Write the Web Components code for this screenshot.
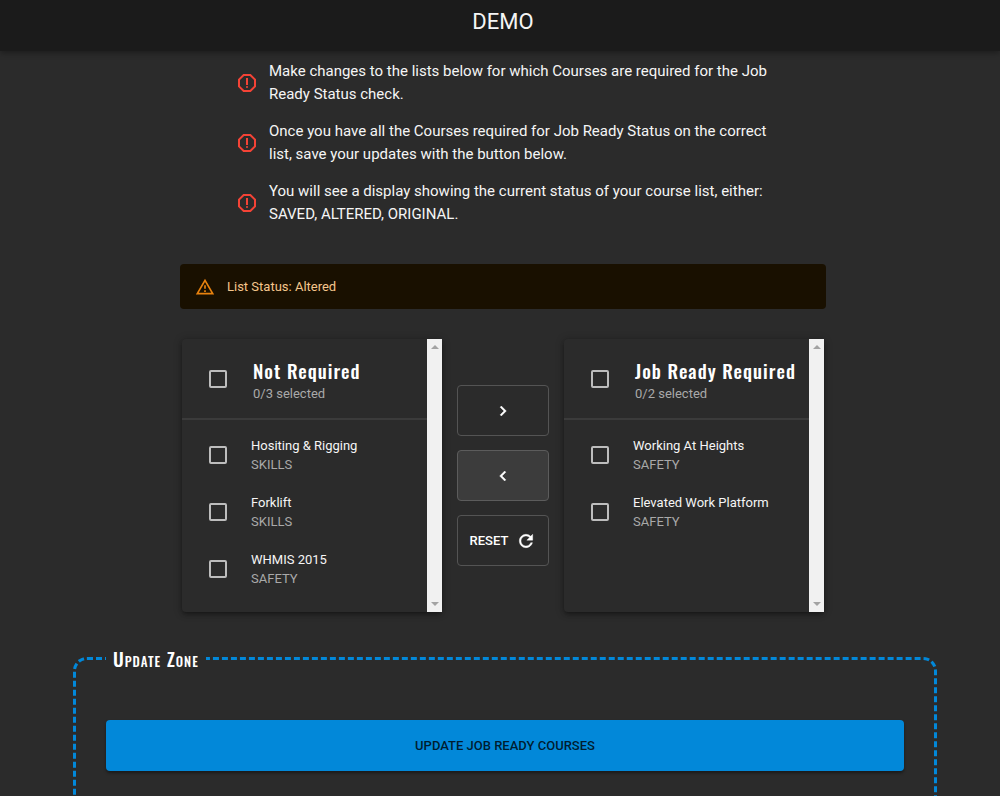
<!DOCTYPE html>
<html lang="en">
<head>
<meta charset="utf-8">
<meta name="viewport" content="width=device-width, initial-scale=1">
<title>Demo</title>
<style>
  html { background: #2b2b2b; scrollbar-width: none; }
  body {
    margin: 0;
    color: #f5f5f5;
    font-family: Roboto, "Liberation Sans", sans-serif;
    --display: Oswald, "Roboto Condensed", "Liberation Sans Narrow", Roboto, sans-serif;
    --accent: #0288d9;
    --muted: #a9a9a9;
  }
</style>
</head>
<body>
<demo-page></demo-page>

<script>
const define = (name, html, setup) => {
  const template = document.createElement('template');
  template.innerHTML = html;
  customElements.define(name, class extends HTMLElement {
    constructor() {
      super();
      this.attachShadow({ mode: 'open' }).append(template.content.cloneNode(true));
    }
    connectedCallback() {
      if (setup) setup(this, this.shadowRoot);
    }
  });
};

define('app-header', `
  <style>
    :host { display: block; background: #1b1b1b; box-shadow: 0 2px 6px rgba(0,0,0,.35); position: relative; }
    h1 { margin: 0; padding: 6px 0 13px 6px; text-align: center; font-size: 22px; line-height: 32px; font-weight: 400; }
  </style>
  <header><h1><slot></slot></h1></header>`);

define('notice-item', `
  <style>
    :host { display: flex; align-items: center; gap: 10px; padding: 7px 0; }
    svg { width: 24px; height: 24px; fill: #f44336; flex: none; }
    p { margin: 0; font-size: 15px; line-height: 23px; }
  </style>
  <svg viewBox="0 0 24 24" aria-hidden="true"><path d="M15.73 3H8.27L3 8.27v7.46L8.27 21h7.46L21 15.73V8.27L15.73 3zM19 14.9L14.9 19H9.1L5 14.9V9.1L9.1 5h5.8L19 9.1v5.8z"/><circle cx="12" cy="16" r="1"/><path d="M11 7h2v7h-2z"/></svg>
  <p><slot></slot></p>`);

define('status-alert', `
  <style>
    :host { display: flex; align-items: center; gap: 12px; padding: 0 15px; height: 45px; border-radius: 4px; background: #191000; color: #f5c68c; font-size: 13px; line-height: 19px; }
    svg { width: 20px; height: 20px; fill: #e8820e; flex: none; }
  </style>
  <svg viewBox="0 0 24 24" aria-hidden="true"><path d="M12 5.99L19.53 19H4.47L12 5.99M12 2L1 21h22L12 2zm1 14h-2v2h2v-2zm0-6h-2v4h2v-4z"/></svg>
  <span role="status"><slot></slot></span>`);

const checkbox = `
  input { appearance: none; box-sizing: border-box; width: 18px; height: 18px; margin: 0; border: 2px solid #bdbdbd; border-radius: 2px; flex: none; }
  input:checked { background: var(--accent); border-color: var(--accent); }`;

define('course-item', `
  <style>
    :host { display: block; }
    label { display: flex; align-items: center; gap: 24px; height: 57px; padding-left: 27px; font-size: 13px; line-height: 19px; }
    ${checkbox}
    span { display: block; }
    .kind { color: var(--muted); }
  </style>
  <label><input type="checkbox"><span><span><slot></slot></span><span class="kind"><slot name="kind"></slot></span></span></label>`);

define('scroll-rail', `
  <style>
    :host { display: flex; flex-direction: column; justify-content: space-between; align-items: center; width: 15px; padding: 6px 0; box-sizing: border-box; background: #f1f1f1; flex: none; }
    svg { width: 8px; height: 4px; fill: #a3a3a3; }
  </style>
  <svg viewBox="0 0 8 4" aria-hidden="true"><path d="M0 4 4 0l4 4z"/></svg>
  <svg viewBox="0 0 8 4" aria-hidden="true"><path d="M0 0h8L4 4z"/></svg>`);

define('course-card', `
  <style>
    :host { display: flex; min-height: 273px; border-radius: 4px; background: #2b2b2b; box-shadow: 0 3px 3px -2px rgba(0,0,0,.2), 0 3px 4px rgba(0,0,0,.14), 0 1px 8px rgba(0,0,0,.3); }
    section { flex: 1; min-width: 0; }
    label { display: flex; align-items: center; gap: 26px; height: 79px; padding-left: 27px; border-bottom: 2px solid #3b3b3b; }
    ${checkbox}
    h2 { margin: 0; color: #fff; font-family: var(--display); font-size: 19px; line-height: 30px; font-weight: 500; letter-spacing: 1px; white-space: nowrap; }
    .count { display: block; color: var(--muted); font-size: 13px; line-height: 18px; }
    .items { padding: 6px 0; }
  </style>
  <section>
    <label><input type="checkbox"><span><h2><slot name="title"></slot></h2><span class="count"><slot name="count"></slot></span></span></label>
    <div class="items"><slot></slot></div>
  </section>
  <scroll-rail></scroll-rail>`);

define('move-button', `
  <style>
    :host { display: block; }
    button { display: flex; align-items: center; justify-content: center; gap: 8px; width: 100%; height: 51px; padding: 0; border: 1px solid #545454; border-radius: 4px; background: none; color: #fff; font: 500 13px/20px Roboto, "Liberation Sans", sans-serif; }
    :host([active]) button { background: #3c3c3c; border-color: #5c5c5c; }
    ::slotted(svg) { width: 20px; height: 20px; fill: currentColor; stroke: currentColor; stroke-width: .5px; }
  </style>
  <button type="button"><slot></slot></button>`,
  (host, root) => root.querySelector('button').setAttribute('aria-label', host.getAttribute('label')));

define('update-zone', `
  <style>
    :host { display: block; }
    fieldset { margin: 0; min-width: 0; border: 3px dashed var(--accent); border-radius: 14px; padding: 47px 30px 60px; }
    legend { padding: 0 7px; color: #fff; font-family: var(--display); font-size: 19px; line-height: 30px; font-weight: 500; font-variant: small-caps; letter-spacing: 1px; }
    button { display: block; width: 100%; height: 51px; padding: 0; border: 0; border-radius: 4px; background: var(--accent); color: rgba(0,0,0,.8); box-shadow: 0 2px 3px rgba(0,0,0,.4); font: 500 13px/20px Roboto, "Liberation Sans", sans-serif; }
  </style>
  <fieldset>
    <legend><slot name="legend"></slot></legend>
    <button type="button"><slot></slot></button>
  </fieldset>`);

define('demo-page', `
  <style>
    :host { display: block; }
    main { display: flex; flex-direction: column; }
    .centered { padding-left: 6px; }
    .notices { max-width: 536px; margin: 0 auto; padding-top: 2px; }
    status-alert { max-width: 616px; margin: 31px auto 30px; }
    .transfer { display: grid; grid-template-columns: 260px 92px 260px; gap: 15px; justify-content: center; align-items: center; }
    .moves { display: grid; gap: 14px; }
    update-zone { margin: 31px 63px 0 73px; }
  </style>
  <app-header>DEMO</app-header>
  <main>
    <div class="centered">
      <div class="notices">
        <notice-item>Make changes to the lists below for which Courses are required for the Job Ready Status check.</notice-item>
        <notice-item>Once you have all the Courses required for Job Ready Status on the correct list, save your updates with the button below.</notice-item>
        <notice-item>You will see a display showing the current status of your course list, either: SAVED, ALTERED, ORIGINAL.</notice-item>
      </div>
      <status-alert>List Status: Altered</status-alert>
      <div class="transfer">
        <course-card>
          <span slot="title">Not Required</span><span slot="count">0/3 selected</span>
          <course-item>Hositing &amp; Rigging<span slot="kind">SKILLS</span></course-item>
          <course-item>Forklift<span slot="kind">SKILLS</span></course-item>
          <course-item>WHMIS 2015<span slot="kind">SAFETY</span></course-item>
        </course-card>
        <div class="moves">
          <move-button label="Move to required"><svg viewBox="0 0 24 24"><path d="M10 6 8.59 7.41 13.17 12l-4.58 4.59L10 18l6-6z"/></svg></move-button>
          <move-button label="Move to not required" active><svg viewBox="0 0 24 24"><path d="M15.41 7.41 14 6l-6 6 6 6 1.41-1.41L10.83 12z"/></svg></move-button>
          <move-button label="Reset">RESET<svg viewBox="0 0 24 24"><path d="M17.65 6.35C16.2 4.9 14.21 4 12 4c-4.42 0-7.99 3.58-7.99 8s3.57 8 7.99 8c3.73 0 6.84-2.55 7.73-6h-2.08c-.82 2.33-3.04 4-5.65 4-3.31 0-6-2.69-6-6s2.69-6 6-6c1.66 0 3.14.69 4.22 1.78L13 11h7V4l-2.35 2.35z"/></svg></move-button>
        </div>
        <course-card>
          <span slot="title">Job Ready Required</span><span slot="count">0/2 selected</span>
          <course-item>Working At Heights<span slot="kind">SAFETY</span></course-item>
          <course-item>Elevated Work Platform<span slot="kind">SAFETY</span></course-item>
        </course-card>
      </div>
    </div>
    <update-zone><span slot="legend">Update Zone</span>UPDATE JOB READY COURSES</update-zone>
  </main>`);
</script>
</body>
</html>
